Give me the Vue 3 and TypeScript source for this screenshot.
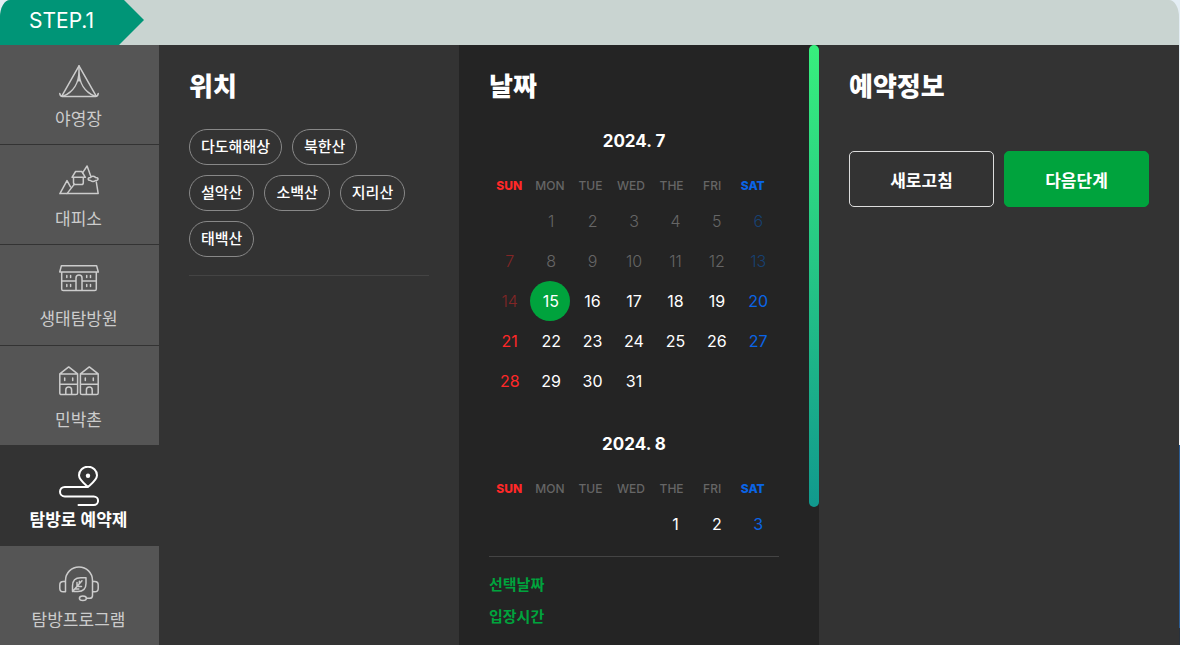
<script setup lang="ts">
import { ref } from 'vue'

interface MenuItem {
  id: string
  label: string
}

interface Month {
  title: string
  weeks: (number | null)[][]
  firstOpen: number
}

const menu: MenuItem[] = [
  { id: 'camp', label: '야영장' },
  { id: 'shelter', label: '대피소' },
  { id: 'eco', label: '생태탐방원' },
  { id: 'village', label: '민박촌' },
  { id: 'trail', label: '탐방로 예약제' },
  { id: 'program', label: '탐방프로그램' },
]
const activeMenu = ref('trail')

const parks: string[] = ['다도해해상', '북한산', '설악산', '소백산', '지리산', '태백산']
const weekdays: string[] = ['SUN', 'MON', 'TUE', 'WED', 'THE', 'FRI', 'SAT']

const months: Month[] = [
  {
    title: '2024. 7',
    firstOpen: 15,
    weeks: [
      [null, 1, 2, 3, 4, 5, 6],
      [7, 8, 9, 10, 11, 12, 13],
      [14, 15, 16, 17, 18, 19, 20],
      [21, 22, 23, 24, 25, 26, 27],
      [28, 29, 30, 31, null, null, null],
    ],
  },
  {
    title: '2024. 8',
    firstOpen: 1,
    weeks: [[null, null, null, null, 1, 2, 3]],
  },
]
const selected = ref('2024. 7-15')
</script>

<template>
  <div class="page">
    <header class="steps">
      <div class="step">STEP.1</div>
    </header>

    <main class="board">
      <nav class="menu">
        <button
          v-for="item in menu"
          :key="item.id"
          type="button"
          class="menu-item"
          :class="{ active: item.id === activeMenu }"
          @click="activeMenu = item.id"
        >
          <svg class="icon" viewBox="0 0 40 40" aria-hidden="true">
            <g v-if="item.id === 'camp'">
              <path d="M20 .8L2.800 31.200M20 .8l17.200 30.400M.8 28.600c.2 1.800 1 2.800 2.600 2.800h33.200c1.600 0 2.400-1 2.600-2.800" />
              <path d="M20 1v15M20 6c0 12-6 21-15.500 25M20 6c0 12 6 21 15.500 25" />
            </g>
            <g v-else-if="item.id === 'shelter'">
              <path d="M.9 28.600h38.300L37.300 17M31.700 11L28.100 1l-4.400 6.700M.9 28.600L8 15.600l3.500 6.200M8 28.600l7.200-9.200" />
              <path d="M16.600 6.500h6.200l3.600 5.800H13zM14.500 12.300v5.500q0 1.800 1.800 1.800h6.200q1.800 0 1.800-1.800v-5.500" />
              <path d="M29.200 14q0-1.600 2.300-1.600 2.500-2.400 5 0 2.500 0 2.500 1.600t-2.500 1.500q-2.500 2-5 0-2.300 0-2.300-1.500z" />
            </g>
            <g v-else-if="item.id === 'eco'">
              <path d="M2.400.8h35.200L39.300 7H.7zM2.700 7v17q0 1.600 1.600 1.600h31.400q1.600 0 1.600-1.600V7M2.700 16.100H17M23 16.100h14.300M17 25.600V13a3 3 0 0 1 6 0v12.600" />
              <path d="M7.800 10.500v2M11.600 10.500v2M27.700 10.500v2M31.500 10.500v2M7.800 19.500v2M11.600 19.500v2M27.700 19.500v2M31.500 19.500v2" />
            </g>
            <g v-else-if="item.id === 'village'">
              <path d="M.8 7.900L9.700.9l8.900 7v19q0 1.700-1.700 1.700H2.500q-1.700 0-1.700-1.700zM.8 7.900h17.800M.8 18.300h17.800M6.800 28.600V24a2.900 2.900 0 0 1 5.800 0v4.600M5.700 12v2.600M13.700 12v2.600" />
              <path d="M21.400 7.900l8.900-7 8.900 7v19q0 1.700-1.700 1.700H23.100q-1.700 0-1.700-1.700zM21.400 7.900h17.800M21.400 18.300h17.800M27.400 28.600V24a2.900 2.900 0 0 1 5.800 0v4.600M26.300 12v2.600M34.300 12v2.600" />
            </g>
            <g v-else-if="item.id === 'trail'">
              <path d="M29 20.900c-4-3.500-9-7-9-11.600a9 8.600 0 0 1 18 0c0 4.600-5 8.100-9 11.600zM29 20.900H5.800a4.800 4.800 0 0 0 0 9.600h29a4.250 4.250 0 0 1 0 8.500H19.500" />
              <circle class="dot" cx="29" cy="9.700" r="2.200" />
            </g>
            <g v-else>
              <path d="M6.500 25.700V14.400a13.500 13.500 0 0 1 27 0v15q0 2.900-2.900 2.900h-3M6.500 15.600H4.300Q.8 15.600.8 19v3.400q0 3.300 3.500 3.300h2.200M33.500 15.600h2.200q3.500 0 3.500 3.400v3.400q0 3.300-3.500 3.300h-2.200" />
              <ellipse cx="23.900" cy="32.300" rx="3.500" ry="2.300" />
              <path d="M13.500 25v-5q0-8.200 8.200-8.200H27v5.400q0 8.200-8.200 8.200h-4.300zM13.500 25.400l9.500-10.700M18 20v-3.500M18 20.400h4.500M20.400 17.600v-2.400M15.800 22.900h4" />
            </g>
          </svg>
          <span>{{ item.label }}</span>
        </button>
      </nav>

      <section class="panel">
        <h2>위치</h2>
        <div class="parks">
          <button v-for="park in parks" :key="park" type="button" class="park">{{ park }}</button>
        </div>
      </section>

      <section class="dates">
        <div class="panel">
          <h2>날짜</h2>
          <div class="months">
            <table v-for="month in months" :key="month.title">
              <caption>{{ month.title }}</caption>
              <thead>
                <tr>
                  <th v-for="day in weekdays" :key="day" scope="col">{{ day }}</th>
                </tr>
              </thead>
              <tbody>
                <tr v-for="(week, w) in month.weeks" :key="w">
                  <td v-for="(day, d) in week" :key="d">
                    <button
                      v-if="day !== null"
                      type="button"
                      :disabled="day < month.firstOpen"
                      :class="{ selected: selected === `${month.title}-${day}` }"
                      @click="selected = `${month.title}-${day}`"
                    >{{ day }}</button>
                  </td>
                </tr>
              </tbody>
            </table>
          </div>
          <div class="choice">
            <p>선택날짜</p>
            <p>입장시간</p>
          </div>
        </div>
        <div class="thumb" aria-hidden="true"></div>
      </section>

      <section class="panel">
        <h2>예약정보</h2>
        <div class="actions">
          <button type="button" class="action">새로고침</button>
          <button type="button" class="action next">다음단계</button>
        </div>
      </section>
    </main>
  </div>
</template>

<style>
body {
  margin: 0;
  background: linear-gradient(#e4eef5 0 60px, #f5f7f8 60px 445px, #2b5c93 445px 628px, #29323d 628px);
}
</style>

<style scoped>
.page {
  display: flex;
  flex-direction: column;
  min-height: 100vh;
  padding-right: 1px;
  box-sizing: border-box;
  font-family: Inter, "Noto Sans CJK KR", sans-serif;
  color: #fff;
}

button {
  margin: 0;
  padding: 0;
  border: 0;
  background: none;
  font: inherit;
  color: inherit;
  cursor: pointer;
}

.steps {
  height: 45px;
  overflow: hidden;
  border-radius: 10px 10px 0 0 / 17px 17px 0 0;
  background: #c9d4d1;
}

.step {
  box-sizing: border-box;
  width: 144px;
  height: 45px;
  padding-left: 29px;
  background: #009577;
  clip-path: polygon(0 0, 124px 0, 100% 20px, 119px 100%, 0 100%);
  font-size: 21px;
  line-height: 42px;
}

.board {
  flex: 1;
  display: grid;
  grid-template-columns: 159px 5fr 6fr 6fr;
  background: #333;
}

.menu {
  display: flex;
  flex-direction: column;
}

.menu-item {
  flex: 1;
  display: flex;
  flex-direction: column;
  align-items: center;
  box-sizing: content-box;
  padding: 20px 2px 0 0;
  border-bottom: 1px solid #333;
  background: #555;
  color: #ccc;
  font-size: 17px;
  line-height: 28px;
}

.menu-item:last-child {
  border-bottom: 0;
}

.menu-item.active {
  background: #333;
  color: #fff;
  font-weight: 700;
}

.icon {
  width: 40px;
  height: 40px;
  fill: none;
  stroke: currentColor;
  stroke-width: 1.500;
  stroke-linecap: round;
  stroke-linejoin: round;
}

.active .icon {
  stroke-width: 2;
}

.dot {
  fill: currentColor;
  stroke: none;
}

.panel {
  padding: 20px 30px 0;
}

h2 {
  margin: 0;
  font-size: 26px;
  font-weight: 900;
  line-height: 44px;
}

.parks {
  display: flex;
  flex-wrap: wrap;
  gap: 10px;
  margin-top: 20px;
  padding-bottom: 18px;
  border-bottom: 1px solid #444;
}

.park {
  height: 36px;
  padding: 0 11px;
  border: 1px solid #888;
  border-radius: 18px;
  font-size: 15px;
  font-weight: 500;
  line-height: 34px;
}

.dates {
  display: flex;
  background: #242424;
}

.dates .panel {
  flex: 1;
}

.thumb {
  width: 10px;
  height: 77%;
  border-radius: 5px;
  background: linear-gradient(#38ef7d, #11998e);
}

.months {
  display: grid;
  gap: 27px;
  padding: 16px 0 12px;
  border-bottom: 1px solid #444;
}

table {
  display: block;
}

caption {
  display: block;
  font-size: 17px;
  font-weight: 700;
  line-height: 32px;
}

thead,
tbody {
  display: block;
}

tr {
  display: grid;
  grid-template-columns: repeat(7, 1fr);
}

thead tr {
  padding: 14px 6px 0 0;
}

th {
  padding: 0;
  color: #666;
  font-size: 12px;
  font-weight: 500;
  line-height: 30px;
}

th:first-child {
  color: #ff2828;
  font-weight: 800;
}

th:last-child {
  color: #0a64e6;
  font-weight: 800;
}

td {
  height: 40px;
  padding: 0;
}

td button {
  display: block;
  box-sizing: border-box;
  width: 100%;
  height: 40px;
  font-size: 16px;
  font-weight: 400;
  line-height: 40px;
}

td button.selected {
  width: 40px;
  padding-left: 1px;
  border-radius: 50%;
  background: #00a33d;
}

td button:disabled {
  color: #666;
  font-weight: 300;
}

td:first-child button {
  color: #ff2828;
}

td:last-child button {
  color: #0a64e6;
}

td:first-child button:disabled {
  color: #822626;
}

td:last-child button:disabled {
  color: #174172;
}

.choice {
  padding-top: 12px;
  color: #00a33d;
  font-size: 15px;
  font-weight: 700;
}

.choice p {
  margin: 0;
  line-height: 32px;
}

.actions {
  display: grid;
  grid-template-columns: 1fr 1fr;
  gap: 10px;
  margin-top: 42px;
}

.action {
  height: 56px;
  border: 1px solid #ddd;
  border-radius: 5px;
  font-size: 17px;
  font-weight: 700;
}

.action.next {
  border-color: #00a33d;
  background: #00a33d;
}
</style>
